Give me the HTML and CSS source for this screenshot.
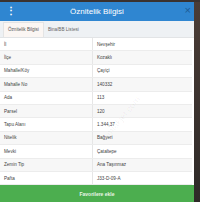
FILE: index.html
```html
<!DOCTYPE html>
<html>
<head>
<meta charset="utf-8">
<link rel="stylesheet" href="styles.css">
</head>
<body>
<div class="page">
  <div class="modal">
    <div class="header">
      <span class="dots">⋮</span>
      <span class="title">Öznitelik Bilgisi</span>
      <span class="close">×</span>
    </div>
    <div class="tabs">
      <div class="tab active">Öznitelik Bilgisi</div>
      <div class="tab">Bina/BB Listesi</div>
    </div>
    <div class="table">
      <div class="row"><div class="k">İl</div><div class="v">Nevşehir</div></div>
      <div class="row alt"><div class="k">İlçe</div><div class="v">Kozaklı</div></div>
      <div class="row"><div class="k">Mahalle/Köy</div><div class="v">Çayiçi</div></div>
      <div class="row alt"><div class="k">Mahalle No</div><div class="v">140332</div></div>
      <div class="row"><div class="k">Ada</div><div class="v">113</div></div>
      <div class="row alt"><div class="k">Parsel</div><div class="v">120</div></div>
      <div class="row"><div class="k">Tapu Alanı</div><div class="v">1.344,37</div></div>
      <div class="row alt"><div class="k">Nitelik</div><div class="v">Bağyeri</div></div>
      <div class="row"><div class="k">Mevki</div><div class="v">Çataltepe</div></div>
      <div class="row alt"><div class="k">Zemin Tip</div><div class="v">Ana Taşınmaz</div></div>
      <div class="row"><div class="k">Pafta</div><div class="v">J33-D-09-A</div></div>
      <div class="mark">emlakjet.com</div>
    </div>
    <div class="btn">Favorilere ekle</div>
  </div>
  <div class="side"></div>
</div>
</body>
</html>
```

FILE: styles.css
```css
html, body { margin: 0; padding: 0; }
body { width: 200px; height: 202px; overflow: hidden; background: #3a3230; font-family: "Liberation Sans", Arial, sans-serif; }
.page { display: flex; height: 202px; padding-top: 2px; box-sizing: border-box; }
.modal { width: 194px; display: flex; flex-direction: column; background: #fff; }
.side { flex: 1; background: linear-gradient(#4a3c36, #2e2a28); }
.header { height: 19px; background: #2f86d1; display: flex; align-items: center; position: relative; color: #fff; }
.dots { position: absolute; left: 6px; top: 3px; font-size: 10px; font-weight: bold; }
.title { flex: 1; text-align: center; font-size: 8px; }
.close { position: absolute; right: 3px; top: 2px; font-size: 11px; color: #1d5c96; }
.tabs { height: 16px; background: #eef1f4; display: flex; align-items: flex-end; padding-left: 3px; border-bottom: 1px solid #e2e4e6; }
.tab { height: 14px; line-height: 14px; font-size: 4.6px; color: #666; padding: 0 4px; }
.tab.active { background: #fbf6f3; border: 1px solid #e4e4e4; border-bottom: none; color: #555; }
.table { display: flex; flex-direction: column; padding-right: 2px; position: relative; }
.row { height: 13.4px; display: flex; align-items: center; font-size: 4.6px; color: #444; border-bottom: 1px solid #ececec; box-sizing: border-box; }
.row.alt { background: #f7f7f7; }
.k { width: 88px; padding-left: 4px; height: 100%; display: flex; align-items: center; border-right: 1px solid #e6e6e6; }
.v { padding-left: 4px; }
.mark { position: absolute; left: 95px; top: 75px; font-size: 9px; color: rgba(0,0,0,0.05); transform: rotate(-50deg); pointer-events: none; }
.btn { flex: 1; background: #4cae4f; color: #e8f5e8; font-size: 5px; font-weight: bold; display: flex; align-items: center; justify-content: center; }
```
